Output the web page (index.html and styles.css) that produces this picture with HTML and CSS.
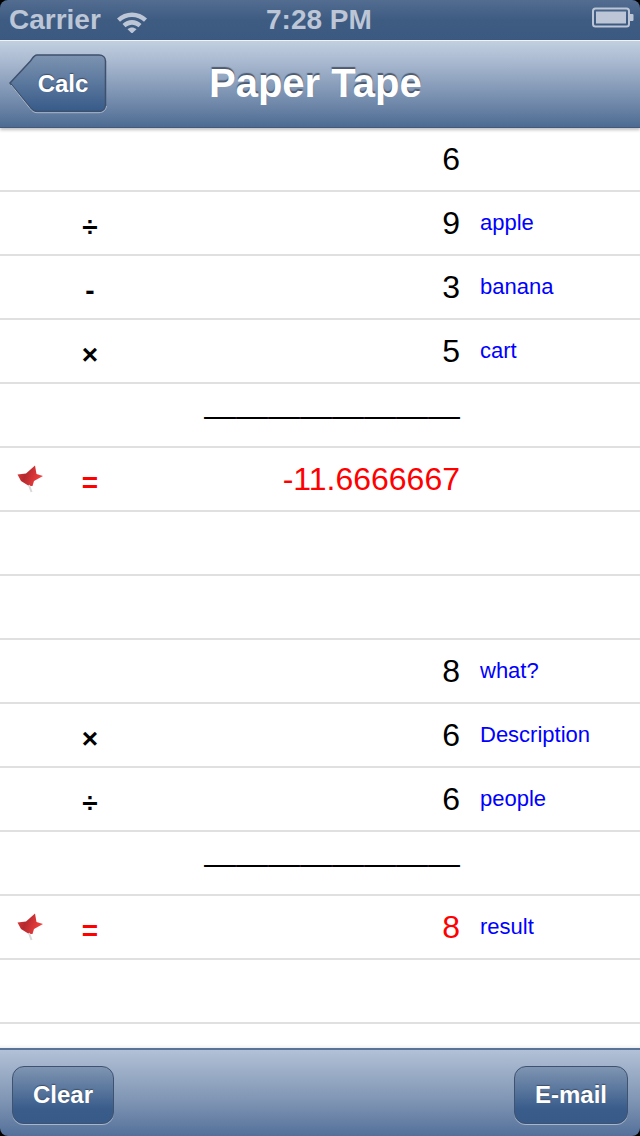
FILE: index.html
```html
<!DOCTYPE html>
<html lang="en">
<head>
<meta charset="utf-8">
<title>Paper Tape</title>
<link rel="stylesheet" href="styles.css">
</head>
<body>
<div class="app">
  <div class="status">
    <div class="status-left">
      <span>Carrier</span>
      <svg class="wifi" width="32" height="24" viewBox="0 0 32 24"><path d="M1 9.5C9 1.5 23 1.5 31 9.5L28 12.8C21.500 6.500 10.500 6.500 4 12.800Z" fill="#bcc6d6"/><path d="M6.500 15C12 9.800 20 9.800 25.500 15L22.500 18.200C18.500 14.800 13.500 14.800 9.500 18.200Z" fill="#bcc6d6"/><path d="M11.500 20.300C14.500 17.800 17.500 17.800 20.500 20.300L16 24.500Z" fill="#bcc6d6"/></svg>
    </div>
    <div class="status-time">7:28 PM</div>
    <svg class="battery" width="42" height="22" viewBox="0 0 42 22"><rect x="1" y="1.500" width="36" height="18" rx="2.500" fill="none" stroke="#bcc6d6" stroke-width="2"/><rect x="4" y="4.500" width="30" height="12" fill="#bcc6d6"/><path d="M38 7h2.500a1 1 0 0 1 1 1v5a1 1 0 0 1-1 1H38z" fill="#bcc6d6"/></svg>
  </div>
  <header class="nav">
    <div class="back-wrap">
      <svg class="back-shape" width="98" height="60" viewBox="0 0 98 60"><defs><linearGradient id="bk" x1="0" y1="0" x2="0" y2="1"><stop offset="0" stop-color="#7d94b1"/><stop offset="1" stop-color="#375a89"/></linearGradient></defs><path d="M1 29L21.500 7C23 5.500 24.500 1 28 1H90C94 1 96.500 3.500 96.500 7V51C96.500 55 94 57.500 90 57.500H28C25 57.500 23 55.500 21.500 54Z" fill="url(#bk)" stroke="#3e506b" stroke-width="1.500"/><path d="M2 31L21 54.500C23 57 25 58.700 28 58.700H90C94 58.700 97 56 97.500 52" fill="none" stroke="#a8b7cb" stroke-width="1"/></svg>
      <span class="back-label">Calc</span>
    </div>
    <h1 class="title">Paper Tape</h1>
  </header>
  <main class="tape">
    <div class="row"><span class="pin"></span><span class="op"></span><span class="num">6</span><span class="note"></span></div>
    <div class="row"><span class="pin"></span><span class="op">÷</span><span class="num">9</span><span class="note">apple</span></div>
    <div class="row"><span class="pin"></span><span class="op">-</span><span class="num">3</span><span class="note">banana</span></div>
    <div class="row"><span class="pin"></span><span class="op">×</span><span class="num">5</span><span class="note">cart</span></div>
    <div class="row"><span class="pin"></span><span class="op"></span><span class="num rule">————————</span><span class="note"></span></div>
    <div class="row result"><span class="pin"><svg width="30" height="32" viewBox="0 0 30 32"><use href="#pushpin"/></svg></span><span class="op">=</span><span class="num">-11.6666667</span><span class="note"></span></div>
    <div class="row"></div>
    <div class="row"></div>
    <div class="row"><span class="pin"></span><span class="op"></span><span class="num">8</span><span class="note">what?</span></div>
    <div class="row"><span class="pin"></span><span class="op">×</span><span class="num">6</span><span class="note">Description</span></div>
    <div class="row"><span class="pin"></span><span class="op">÷</span><span class="num">6</span><span class="note">people</span></div>
    <div class="row"><span class="pin"></span><span class="op"></span><span class="num rule">————————</span><span class="note"></span></div>
    <div class="row result"><span class="pin"><svg width="30" height="32" viewBox="0 0 30 32"><use href="#pushpin"/></svg></span><span class="op">=</span><span class="num">8</span><span class="note">result</span></div>
    <div class="row"></div>
    <div class="row short"></div>
  </main>
  <footer class="toolbar">
    <div class="btn">Clear</div>
    <div class="btn">E-mail</div>
  </footer>
  <svg class="defs" width="0" height="0"><defs>
    <linearGradient id="pg" x1="0" y1="0" x2="1" y2="0.300"><stop offset="0" stop-color="#e83a3a"/><stop offset=".4" stop-color="#b32a2e"/><stop offset="1" stop-color="#f4403f"/></linearGradient>
    <g id="pushpin"><path d="M1.500 11.500L10 10.500L19 2.500L20.500 11L27 13L18 18L16.500 23L13 23L5 18Z" fill="url(#pg)"/><path d="M13 22L15.500 29" stroke="#d9d9d9" stroke-width="2"/></g>
  </defs></svg>
</div>
</body>
</html>
```
FILE: styles.css
```css
* { box-sizing: border-box; }
html, body { margin: 0; padding: 0; background: #fff; }
body { font-family: "Liberation Sans", Arial, sans-serif; }
.app { width: 640px; height: 1136px; display: flex; flex-direction: column; overflow: hidden; position: relative; }
.status { height: 40px; flex: none; display: flex; align-items: center; justify-content: space-between; padding: 0 6px 0 9px; background: linear-gradient(#526d90, #3e5b82 50%, #3c5a81); color: #bcc6d6; font-size: 28px; font-weight: bold; position: relative; border-radius: 8px 8px 0 0; }
.app { background: #000; }
.status-left { display: flex; align-items: center; gap: 15px; }
.wifi { margin-top: 2px; }
.status-time { position: absolute; left: 266px; top: 3px; line-height: 34px; }
.battery { margin-top: -4px; }
.nav { height: 88px; flex: none; display: flex; align-items: center; position: relative; background: linear-gradient(#c1cfe0, #a8b8cf 25%, #6d86a8 75%, #4d6b92); border-top: 1px solid #f0f4f8; border-bottom: 1px solid #42597a; box-shadow: 0 2px 3px rgba(0,0,0,.25); z-index: 2; }
.back-wrap { width: 98px; height: 60px; margin-left: 9px; margin-top: -1px; position: relative; display: flex; align-items: center; justify-content: center; padding-left: 10px; }
.back-shape { position: absolute; left: 0; top: 0; }
.back-label { position: relative; color: #fff; font-size: 24px; font-weight: bold; text-shadow: 0 -1px 1px #3d4e68; }
.title { position: absolute; left: 209px; top: 18px; margin: 0; color: #fff; font-size: 40px; line-height: 48px; font-weight: bold; text-shadow: 0 -2px 1px #4d5a70; }
.tape { flex: 1; min-height: 0; background: #fff; }
.row { height: 64px; border-bottom: 2px solid #e0e0e0; display: flex; align-items: center; }
.row.short { height: 26px; border-bottom: none; box-shadow: inset 0 -6px 4px -4px #ddd; }
.pin { width: 60px; flex: none; display: flex; align-items: center; padding-left: 16px; height: 100%; }
.op { width: 60px; flex: none; text-align: center; font-size: 28px; font-weight: bold; line-height: 32px; margin-top: 8px; }
.num { width: 340px; flex: none; text-align: right; font-size: 32px; line-height: 40px; }
.rule { white-space: nowrap; }
.note { flex: 1; padding-left: 20px; color: #0000ff; font-size: 22px; line-height: 28px; }
.result .op, .result .num { color: #ff0000; }
.toolbar { height: 88px; flex: none; display: flex; align-items: center; justify-content: space-between; padding: 0 12px; background: linear-gradient(#b2c1d7, #a9b9d0 10%, #7e94b3 60%, #54709a); border-top: 2px solid #5b7396; border-radius: 0 0 8px 8px; }
.btn { height: 58px; display: flex; align-items: center; justify-content: center; padding: 0 20px; color: #fff; font-size: 24px; font-weight: bold; border: 1.500px solid #3f526f; border-radius: 12px; background: linear-gradient(#7f95b2, #395c8b 75%, #375a89); box-shadow: 0 1px 0 #a6b6cb; text-shadow: 0 -1px 1px #3d4e68; margin-top: 3px; }
.defs { position: absolute; }
```
